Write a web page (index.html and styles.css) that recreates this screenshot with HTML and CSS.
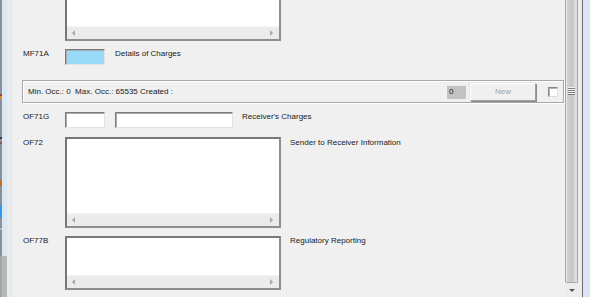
FILE: index.html
```html
<!DOCTYPE html>
<html lang="en">
<head>
  <meta charset="UTF-8" />
  <title>MT Message Fields</title>
  <link rel="stylesheet" href="styles.css">
</head>
<body>
  <div class="window">
    <div class="edge-left"></div>

    <div class="form">
      <!-- previous field, scrolled mostly out of view -->
      <div class="row row-top">
        <div class="label"></div>
        <div class="memo memo-top">
          <div class="memo-body"></div>
          <div class="hscroll"><span class="arr-left"></span><span class="arr-right"></span></div>
        </div>
      </div>

      <div class="row row-mf71a">
        <div class="label">MF71A</div>
        <div class="field field-short field-blue"></div>
        <div class="caption caption-wide">Details of Charges</div>
      </div>

      <div class="group">
        <span class="occ">Min. Occ.: 0&nbsp; Max. Occ.: 65535 Created :</span>
        <span class="count">0</span>
        <button class="btn-new" disabled>New</button>
        <span class="check"></span>
      </div>

      <div class="row row-of71g">
        <div class="label">OF71G</div>
        <div class="field field-short"></div>
        <div class="field field-long"></div>
        <div class="caption">Receiver's Charges</div>
      </div>

      <div class="row row-of72">
        <div class="label">OF72</div>
        <div class="memo memo-big">
          <div class="memo-body"></div>
          <div class="hscroll"><span class="arr-left"></span><span class="arr-right"></span></div>
        </div>
        <div class="caption">Sender to Receiver Information</div>
      </div>

      <div class="row row-of77b">
        <div class="label">OF77B</div>
        <div class="memo memo-small">
          <div class="memo-body"></div>
          <div class="hscroll"><span class="arr-left"></span><span class="arr-right"></span></div>
        </div>
        <div class="caption">Regulatory Reporting</div>
      </div>
    </div>

    <div class="vscroll">
      <div class="thumb"><span class="grip"></span></div>
      <div class="arrow-down"><span></span></div>
    </div>

    <div class="edge-right"></div>
  </div>
</body>
</html>
```

FILE: styles.css
```css
body {
  margin: 0;
  background-color: #f0f0f0;
  font-family: "Liberation Sans", Arial, sans-serif;
  font-size: 8px;
  line-height: 8px;
  color: #202020;
  overflow: hidden;
}

.window {
  display: flex;
  width: 590px;
  height: 297px;
  overflow: hidden;
}

/* strip of the window behind, on the left */
.edge-left {
  width: 11px;
  flex-shrink: 0;
  background:
    linear-gradient(to bottom,
      #8b9199 0 94px, #b23c2a 94px 96px, #e08a30 96px 99px,
      #8b9199 99px 137px, #3c3c3c 137px 139px, #8b9199 139px 142px,
      #8a5a40 142px 144px, #8b9199 144px 180px, #c86c1c 180px 186px,
      #8b9199 186px 205px, #3399ee 205px 218px, #8b9199 218px 228px,
      #b8b8b8 228px 230px, #8b9199 230px 256px, #a4a6a4 256px) no-repeat 0 0 / 2px 100%,
    linear-gradient(to bottom, transparent 0 256px, #b4b8b8 256px) no-repeat 2px 0 / 5px 100%,
    linear-gradient(to right, #8b9199 0 2px, #dce7f4 2px 7px, #e9ecef 7px 11px);
}

.form {
  width: 553px;
  flex-shrink: 0;
  border-left: 1px solid #e2e2e2;
  display: flex;
  flex-direction: column;
}

.row {
  display: flex;
  align-items: flex-start;
  padding-left: 11px;
}

.label {
  width: 42px;
  flex-shrink: 0;
  padding-top: 1px;
}

.caption {
  margin-left: 9px;
  padding-top: 1px;
  white-space: nowrap;
}

.caption-wide {
  margin-left: 10px;
}

/* single line inputs */
.field {
  height: 16px;
  box-sizing: border-box;
  background: #fff;
  border: 1px solid;
  border-color: #7c7c7c #e3e3e3 #e3e3e3 #7c7c7c;
  box-shadow: inset 1px 1px 0 #a9a9a9;
}

.field-short {
  width: 40px;
}

.field-long {
  width: 118px;
  margin-left: 10px;
}

.field-blue {
  background: #99d9f8;
}

/* multi line inputs */
.memo {
  width: 216px;
  box-sizing: border-box;
  border: 2px solid;
  border-color: #767676 #8e8e8e #8e8e8e #767676;
  background: #fff;
  display: flex;
  flex-direction: column;
}

.memo-body {
  flex: 1;
}

.memo-top {
  height: 60px;
  margin-top: -19px;
}

.memo-big {
  height: 91px;
}

.memo-small {
  height: 54px;
}

.hscroll {
  height: 12px;
  background: #ebebeb;
  border-top: 1px solid #f4f4f4;
  display: flex;
  align-items: center;
  justify-content: space-between;
  padding: 0 6px 0 5px;
}

.arr-left, .arr-right {
  width: 0;
  height: 0;
  border-top: 3px solid transparent;
  border-bottom: 3px solid transparent;
}

.arr-left {
  border-right: 3px solid #a8a8a8;
}

.arr-right {
  border-left: 3px solid #a8a8a8;
}

.row-mf71a {
  margin-top: 8px;
}

/* occurrence group box */
.group {
  margin: 15px 0 0 10px;
  width: 542px;
  height: 23px;
  box-sizing: border-box;
  border: 1px solid #a8a8a8;
  box-shadow: inset 1px 1px 0 #fff, 1px 1px 0 #fff;
  display: flex;
  align-items: center;
  padding: 0 5px 0 5px;
}

.occ {
  flex: 1;
  white-space: nowrap;
  padding-top: 1px;
}

.count {
  width: 19px;
  height: 13px;
  background: #c2c2c2;
  padding: 2px 0 0 2px;
  box-sizing: border-box;
  margin-top: 1px;
}

.btn-new {
  width: 66px;
  height: 18px;
  margin-left: 4px;
  background: #f0f0f0;
  border: 1px solid;
  border-color: #fff #a0a0a0 #a0a0a0 #fff;
  box-shadow: -1px -1px 0 #e3e3e3, 1px 1px 0 #8c8c8c;
  font: inherit;
  color: #a0a0a0;
  padding: 0;
  margin-top: 1px;
}

.check {
  width: 10px;
  height: 10px;
  box-sizing: border-box;
  margin-left: 12px;
  background: #fff;
  border: 1px solid;
  border-color: #8a8a8a #dcdcdc #dcdcdc #8a8a8a;
  box-shadow: inset 1px 1px 0 #b4b4b4;
}

.row-of71g {
  margin-top: 9px;
}

.row-of72 {
  margin-top: 9px;
}

.row-of72 .label, .row-of72 .caption {
  padding-top: 2px;
}

.row-of77b {
  margin-top: 8px;
}

/* right scrollbar */
.vscroll {
  width: 18px;
  flex-shrink: 0;
  box-sizing: border-box;
  background: #ececec;
  border-right: 1px solid #6e6e6e;
  display: flex;
  flex-direction: column;
}

.thumb {
  width: 13px;
  height: 283px;
  box-sizing: border-box;
  border: 1px solid #a6a6a6;
  border-top: none;
  border-radius: 0 0 2px 2px;
  background: linear-gradient(to right, #e8e8e8 0 1px, #d2d2d2 1px, #c4c4c4 7px, #d8d8d8 8px, #dedede);
  display: flex;
  flex-direction: column;
  align-items: center;
  padding-top: 87px;
}

.grip {
  width: 7px;
  height: 8px;
  background: repeating-linear-gradient(to bottom, #f4f4f4 0 1px, #7f7f7f 1px 2px);
}

.arrow-down {
  width: 13px;
  flex: 1;
  display: flex;
  align-items: center;
  justify-content: center;
}

.arrow-down span {
  width: 0;
  height: 0;
  border-left: 3px solid transparent;
  border-right: 3px solid transparent;
  border-top: 3px solid #555;
  margin-top: 1px;
}

.edge-right {
  width: 7px;
  flex-shrink: 0;
  background: #dae5f3;
}
```
